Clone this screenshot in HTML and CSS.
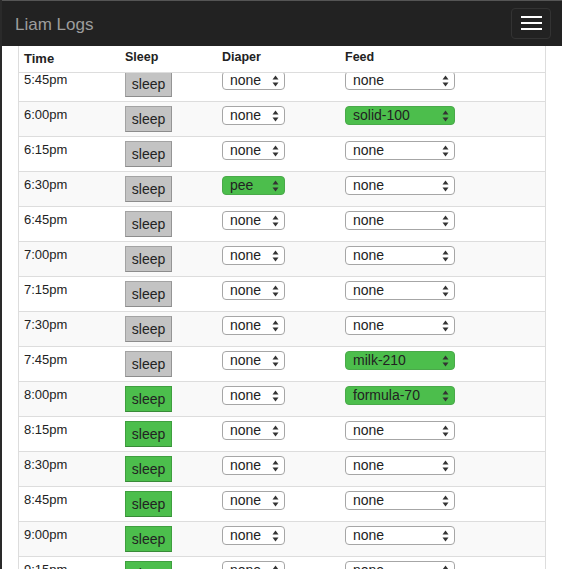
FILE: index.html
```html
<!DOCTYPE html>
<html>
<head>
<meta charset="utf-8">
<link rel="stylesheet" href="styles.css">
</head>
<body>
<div class="page">
  <nav class="navbar">
    <span class="brand">Liam Logs</span>
    <button class="toggle"><span class="bar"></span><span class="bar"></span><span class="bar"></span></button>
  </nav>
  <div class="content">
    <div class="table">
      <div class="row head">
        <div class="c time">Time</div>
        <div class="c sleep">Sleep</div>
        <div class="c diaper">Diaper</div>
        <div class="c feed">Feed</div>
      </div>
      <div class="body">
        <div class="rows" id="rows"></div>
      </div>
    </div>
  </div>
</div>
<script src="app.js"></script>
</body>
</html>
```

FILE: app.js
```js
var data = [
  ["5:45pm", 0, "none", "none"],
  ["6:00pm", 0, "none", "solid-100"],
  ["6:15pm", 0, "none", "none"],
  ["6:30pm", 0, "pee", "none"],
  ["6:45pm", 0, "none", "none"],
  ["7:00pm", 0, "none", "none"],
  ["7:15pm", 0, "none", "none"],
  ["7:30pm", 0, "none", "none"],
  ["7:45pm", 0, "none", "milk-210"],
  ["8:00pm", 1, "none", "formula-70"],
  ["8:15pm", 1, "none", "none"],
  ["8:30pm", 1, "none", "none"],
  ["8:45pm", 1, "none", "none"],
  ["9:00pm", 1, "none", "none"],
  ["9:15pm", 1, "none", "none"]
];
var arrows = '<svg class="arr" width="7" height="12" viewBox="0 0 7 12"><path d="M3.5 0.5 L6.5 4.5 L0.5 4.5 Z M3.5 11.5 L6.5 7.5 L0.5 7.5 Z" fill="#333"/></svg>';
var html = "";
data.forEach(function (d, i) {
  html += '<div class="row' + (i % 2 ? ' striped' : '') + '">' +
    '<div class="c time">' + d[0] + '</div>' +
    '<div class="c sleep"><span class="btn' + (d[1] ? ' on' : '') + '">sleep</span></div>' +
    '<div class="c diaper"><span class="sel small' + (d[2] !== 'none' ? ' on' : '') + '"><span class="v">' + d[2] + '</span>' + arrows + '</span></div>' +
    '<div class="c feed"><span class="sel wide' + (d[3] !== 'none' ? ' on' : '') + '"><span class="v">' + d[3] + '</span>' + arrows + '</span></div>' +
    '</div>';
});
document.getElementById("rows").innerHTML = html;
```

FILE: styles.css
```css
html, body {
  margin: 0;
  padding: 0;
  background: #fff;
}
body {
  font-family: "Liberation Sans", Arial, sans-serif;
  color: #222;
}
.page {
  width: 562px;
  height: 569px;
  overflow: hidden;
  display: flex;
  flex-direction: column;
  border-left: 2px solid #2a2a2a;
  box-sizing: border-box;
}
.navbar {
  flex: none;
  height: 46px;
  background: #222;
  border-top: 1px solid #555;
  box-sizing: border-box;
  display: flex;
  align-items: center;
  justify-content: space-between;
  padding: 0 11px 0 13px;
}
.brand {
  color: #9d9d9d;
  font-size: 17px;
  margin-top: 3px;
}
.toggle {
  width: 40px;
  height: 31px;
  margin-top: -1px;
  background: transparent;
  border: 1px solid #333;
  border-radius: 4px;
  display: flex;
  flex-direction: column;
  align-items: center;
  justify-content: center;
  gap: 4px;
  padding: 0;
}
.bar {
  display: block;
  width: 21px;
  height: 2px;
  background: #fff;
}
.content {
  flex: 1;
  min-height: 0;
  padding: 0 16px 0 16px;
}
.table {
  height: 100%;
  border-left: 1px solid #ddd;
  border-right: 1px solid #ddd;
  display: flex;
  flex-direction: column;
}
.body {
  flex: 1;
  min-height: 0;
  overflow: hidden;
}
.rows {
  margin-top: -6px;
}
.row {
  display: grid;
  grid-template-columns: 101px 97px 123px 1fr;
  height: 35px;
  box-sizing: border-box;
  border-bottom: 1px solid #ddd;
  background: #fff;
}
.row.striped {
  background: #f9f9f9;
}
.row.head {
  height: 27px;
  font-weight: bold;
  font-size: 12.5px;
  border-bottom: 1px solid #ddd;
  flex: none;
  position: relative;
  z-index: 1;
}
.row.head .c {
  padding-top: 4px;
}
.c {
  padding: 4px 5px 0 5px;
  box-sizing: border-box;
}
.time {
  font-size: 13px;
  line-height: 18px;
}
.btn {
  display: inline-flex;
  align-items: center;
  justify-content: center;
  width: 47px;
  height: 26px;
  box-sizing: border-box;
  background: #c3c3c3;
  border: 1px solid #a3a3a3;
  border-bottom-color: #8c8c8c;
  border-right-color: #959595;
  font-size: 14px;
  color: #222;
  padding-bottom: 1px;
}
.btn.on {
  background: #4cbe4c;
  border-color: #3f9f3f;
  border-bottom-color: #388a38;
}
.sel {
  display: flex;
  align-items: center;
  justify-content: space-between;
  height: 19px;
  box-sizing: border-box;
  border: 1px solid #a6a6a6;
  border-radius: 4px;
  background: #fff;
  font-size: 14px;
  color: #222;
  padding: 0 5px 0 7px;
}
.sel.small {
  width: 63px;
}
.sel.wide {
  width: 110px;
}
.sel.on {
  background: #4cbe4c;
  border-color: #4aa94a;
}
.sel .v {
  line-height: 17px;
}
.arr {
  display: block;
}
```
